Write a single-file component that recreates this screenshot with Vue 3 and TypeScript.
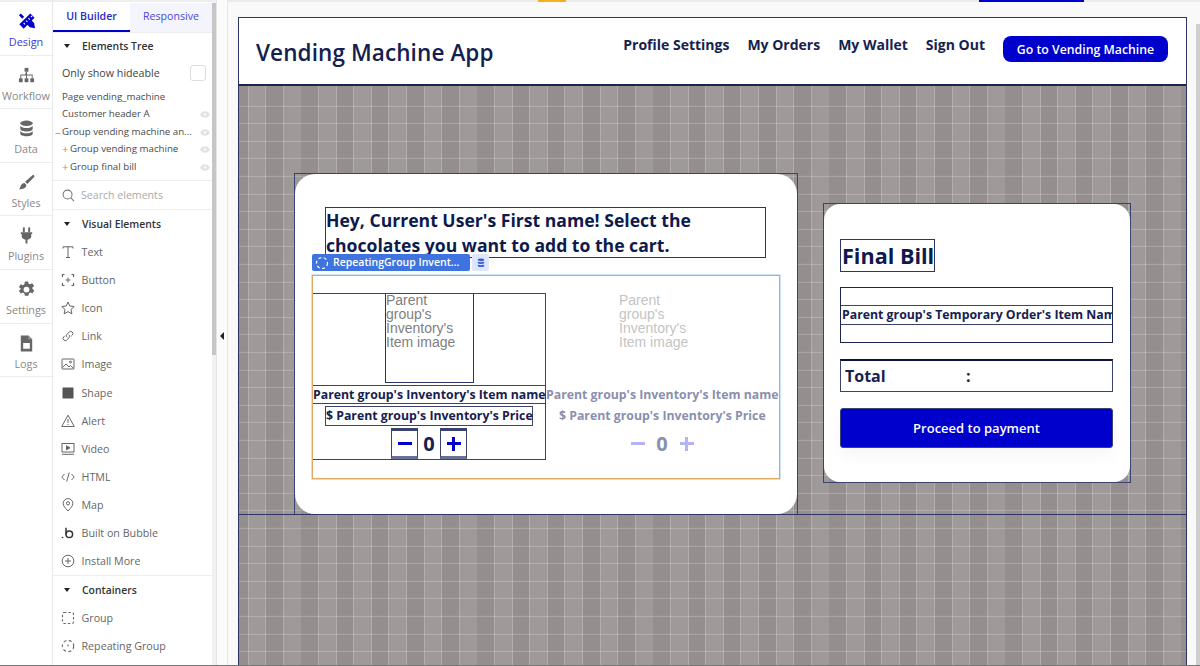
<script setup lang="ts">
const rail = [
  { key: 'design', label: 'Design' },
  { key: 'workflow', label: 'Workflow' },
  { key: 'data', label: 'Data' },
  { key: 'styles', label: 'Styles' },
  { key: 'plugins', label: 'Plugins' },
  { key: 'settings', label: 'Settings' },
  { key: 'logs', label: 'Logs' },
]
const tree = [
  { label: 'Page vending_machine', prefix: '', eye: false, cls: '' },
  { label: 'Customer header A', prefix: '', eye: true, cls: '' },
  { label: 'Group vending machine an...', prefix: '–', eye: true, cls: 'minus' },
  { label: 'Group vending machine', prefix: '+', eye: true, cls: 'plus' },
  { label: 'Group final bill', prefix: '+', eye: true, cls: 'plus' },
]
const visual = [
  { key: 'text', label: 'Text' },
  { key: 'button', label: 'Button' },
  { key: 'icon', label: 'Icon' },
  { key: 'link', label: 'Link' },
  { key: 'image', label: 'Image' },
  { key: 'shape', label: 'Shape' },
  { key: 'alert', label: 'Alert' },
  { key: 'video', label: 'Video' },
  { key: 'html', label: 'HTML' },
  { key: 'map', label: 'Map' },
  { key: 'bubble', label: 'Built on Bubble' },
  { key: 'install', label: 'Install More' },
]
const containers = [
  { key: 'group', label: 'Group' },
  { key: 'repeating', label: 'Repeating Group' },
]
const nav = ['Profile Settings', 'My Orders', 'My Wallet', 'Sign Out']
</script>

<template>
  <div class="app">
    <nav class="rail">
      <div v-for="r in rail" :key="r.key" class="rail-item" :class="{ active: r.key === 'design' }">
        <svg class="rail-icon" viewBox="0 0 20 20">
          <g v-if="r.key === 'design'" fill="#0000cc">
            <path d="M2 3.500 4 1.500 7.500 5 5.500 7zM11 8.500l2-2 5 5 1 5.500-5.500-1-5-5z" />
            <path d="M14 1.500 18.500 6 7 17.500 2.500 13z" />
            <path d="M14.500 4 16 5.500M12 6.500 13.500 8M9.500 9 11 10.500M7 11.500 8.500 13" stroke="#fff" stroke-width="1.100" />
          </g>
          <g v-else-if="r.key === 'workflow'" fill="#666">
            <rect x="8" y="2" width="4" height="4" />
            <rect x="2" y="13" width="4" height="4" rx=".6" />
            <rect x="8" y="13" width="4" height="4" rx=".6" />
            <rect x="14" y="13" width="4" height="4" rx=".6" />
            <path d="M9.500 6h1v3H16.500v4h-1v-3h-5v3h-1v-3h-5v3h-1V9h5z" />
          </g>
          <g v-else-if="r.key === 'data'" fill="#666">
            <ellipse cx="10" cy="4.500" rx="6.500" ry="2.800" />
            <path d="M3.500 7c1 1.600 3.600 2.400 6.500 2.400S15.500 8.600 16.500 7v3.500c0 1.500-2.900 2.700-6.500 2.700s-6.500-1.200-6.500-2.700z" />
            <path d="M3.500 12.500c1 1.600 3.600 2.400 6.500 2.400s5.500-.8 6.500-2.400v3c0 1.500-2.900 2.700-6.500 2.700s-6.500-1.200-6.500-2.700z" />
          </g>
          <g v-else-if="r.key === 'styles'" fill="#666">
            <path d="M18 2.500c.6.500.4 1.200-.2 1.900l-7 7.100-2.300-2.200 7.500-6.600c.7-.6 1.400-.7 2-.2z" />
            <path d="M7.800 10.400l2 2c.2 2.700-2.200 5-7.800 4.600 1.500-1 1.300-2.200 1.900-3.600.7-1.700 2.300-3 3.900-3z" />
          </g>
          <g v-else-if="r.key === 'plugins'" fill="#666">
            <rect x="6.200" y="1.500" width="2" height="5" />
            <rect x="11.800" y="1.500" width="2" height="5" />
            <path d="M4 6.500h12v2h-1v2.500c0 1.800-2 3-4 3.400V18.500H9v-4.100c-2-.4-4-1.600-4-3.400V8.500H4z" />
          </g>
          <g v-else-if="r.key === 'settings'" fill="#666">
            <path fill-rule="evenodd" d="M8.300 1.500h3.400l.5 2.400 1.500.7 2.200-1.200 2.200 2.900-1.900 1.600.1 1.600 1.900 1.500-1.900 3-2.300-.9-1.400.8-.6 2.600H8.300l-.6-2.500-1.400-.8-2.400 1-1.900-3 2-1.600V9L2 7.400 4 4.400l2.300 1 1.500-.9zM10 7a3.100 3.100 0 100 6.200A3.100 3.100 0 0010 7z" />
          </g>
          <g v-else fill="#666">
            <path fill-rule="evenodd" d="M4 1.500h8l4 4V18.500H4zM6.500 9.500v6h7v-6z" />
            <path d="M12 1.500 16 5.500h-4z" fill="#999" />
          </g>
        </svg>
        <span class="rail-label">{{ r.label }}</span>
      </div>
    </nav>

    <aside class="panel">
      <div class="tabs">
        <div class="tab on">UI Builder</div>
        <div class="tab off">Responsive</div>
      </div>
      <div class="section-head tree-head"><i class="caret"></i>Elements Tree</div>
      <div class="hideable">
        <span>Only show hideable</span>
        <span class="check"></span>
      </div>
      <div class="tree">
        <div v-for="t in tree" :key="t.label" class="tree-row" :class="t.cls">
          <span v-if="t.prefix" class="prefix">{{ t.prefix }}</span>
          <span class="tree-label">{{ t.label }}</span>
          <svg v-if="t.eye" class="eye" viewBox="0 0 12 8">
            <path d="M0 4c1.600-2.600 3.600-4 6-4s4.400 1.400 6 4c-1.600 2.600-3.600 4-6 4S1.600 6.600 0 4z" fill="#e2e2e2" />
            <circle cx="6" cy="4" r="1.700" fill="#f6f6f6" />
          </svg>
        </div>
      </div>
      <div class="search">
        <svg class="search-icon" viewBox="0 0 14 14" fill="none" stroke="#777" stroke-width="1.100">
          <circle cx="6" cy="6" r="4.800" />
          <path d="M9.500 9.500 13 13" />
        </svg>
        <span>Search elements</span>
      </div>
      <div class="section-head visual-head"><i class="caret"></i>Visual Elements</div>
      <div class="list">
        <div v-for="v in visual" :key="v.key" class="list-row">
          <svg class="list-icon" viewBox="0 0 14 14" fill="none" stroke="#666" stroke-width="1">
            <path v-if="v.key === 'text'" d="M2 3.500V1.800h10v1.700M7 1.800V12.500M5 12.500h4" />
            <g v-else-if="v.key === 'button'">
              <path d="M3.500 1.500h-2v2.500M10.500 1.500h2v2.500M3.500 12.500h-2V10M10.500 12.500h2V10" stroke-width="1.200" />
              <path d="M7 4.500v5M4.500 7h5" />
            </g>
            <path v-else-if="v.key === 'icon'" d="M7 1 8.800 5l4.400.5-3.200 3 .9 4.400L7 10.600 3.100 12.900l.9-4.400-3.200-3L5.200 5z" />
            <g v-else-if="v.key === 'link'">
              <path d="M6 8.200a2.200 2.200 0 010-3l2.300-2.300a2.200 2.200 0 013.100 3.100L10.200 7.200" />
              <path d="M8 5.800a2.200 2.200 0 010 3L5.700 11.100a2.200 2.200 0 01-3.100-3.100L3.800 6.800" />
            </g>
            <g v-else-if="v.key === 'image'">
              <rect x="1" y="2" width="12" height="10" rx=".8" />
              <path d="M1.500 10.500 5 7l3 3 1.500-1.500 3 3" />
              <circle cx="9.500" cy="5" r="1" />
            </g>
            <rect v-else-if="v.key === 'shape'" x="1.500" y="1.500" width="11" height="11" rx=".6" fill="#555" stroke="none" />
            <g v-else-if="v.key === 'alert'">
              <path d="M7 1.200 13.300 12.500H.7z" />
              <path d="M7 5v4M7 10v1" />
            </g>
            <g v-else-if="v.key === 'video'">
              <rect x="1" y="1.500" width="12" height="8.500" />
              <path d="M5.500 3.800 9 5.800 5.500 7.800z" fill="#666" />
              <path d="M1 12.300h12" />
            </g>
            <g v-else-if="v.key === 'html'">
              <path d="M3.500 4 .8 7l2.700 3M10.500 4l2.700 3-2.700 3M8.300 2.500 5.700 11.500" />
            </g>
            <g v-else-if="v.key === 'map'">
              <path d="M7 13C4 9.800 2.200 7.700 2.200 5.400a4.800 4.800 0 019.600 0C11.800 7.700 10 9.800 7 13z" />
              <circle cx="7" cy="5.300" r="1.600" />
            </g>
            <g v-else-if="v.key === 'bubble'" stroke="#333">
              <circle cx="8.300" cy="8.300" r="3.300" stroke-width="1.500" />
              <path d="M5 1.800V8.300" stroke-width="1.500" />
              <circle cx="1.500" cy="11.500" r=".8" fill="#333" stroke="none" />
            </g>
            <g v-else>
              <circle cx="7" cy="7" r="5.800" />
              <path d="M7 4v6M4 7h6" />
            </g>
          </svg>
          <span>{{ v.label }}</span>
        </div>
      </div>
      <div class="section-head containers-head"><i class="caret"></i>Containers</div>
      <div class="list">
        <div v-for="c in containers" :key="c.key" class="list-row">
          <svg class="list-icon" viewBox="0 0 14 14" fill="none" stroke="#666" stroke-width="1.100">
            <rect v-if="c.key === 'group'" x="1.500" y="1.500" width="11" height="11" rx="1.500" stroke-dasharray="2.400 2" />
            <g v-else>
              <circle cx="7" cy="7" r="5.700" stroke-dasharray="3 2.400" />
              <path d="M7 5.500v2" />
            </g>
          </svg>
          <span>{{ c.label }}</span>
        </div>
      </div>
    </aside>

    <div class="scroll"><div class="thumb"></div></div>
    <div class="handle"><i></i></div>

    <main class="canvas">
      <div class="page">
        <header class="head">
          <h1 class="brand">Vending Machine App</h1>
          <div class="nav">
            <a v-for="n in nav" :key="n">{{ n }}</a>
          </div>
          <button class="cta">Go to Vending Machine</button>
        </header>
        <section class="stage">
          <div class="wrap">
            <div class="card left">
              <div class="card-inner">
                <div class="hello">Hey, Current User's First name! Select the chocolates you want to add to the cart.</div>
                <div class="rg-tag">
                  <span class="tag-main">
                    <svg class="tag-icon" viewBox="0 0 14 14" fill="none" stroke="#fff" stroke-width="1.200"><circle cx="7" cy="7" r="5.500" stroke-dasharray="3 2.400" /></svg>
                    RepeatingGroup Invent...
                  </span>
                  <span class="tag-db">
                    <svg viewBox="0 0 10 12" width="8" height="10" fill="#3b5fe0"><ellipse cx="5" cy="2" rx="4" ry="1.700" /><path d="M1 4.200c1 1 7 1 8 0v2c-1 1.300-7 1.300-8 0zM1 8c1 1 7 1 8 0v2c-1 1.400-7 1.400-8 0z" /></svg>
                  </span>
                </div>
                <div class="rg">
                  <div class="rg-cell first">
                    <div class="cell-top"></div>
                    <div class="item">
                      <div class="img-box">Parent group's Inventory's Item image</div>
                      <div class="name boxed">Parent group's Inventory's Item name</div>
                      <div class="price boxed">$ Parent group's Inventory's Price</div>
                      <div class="counter">
                        <span class="pm boxed"><b class="minus-bar"></b></span>
                        <span class="qty">0</span>
                        <span class="pm boxed"><b class="plus-bar"></b></span>
                      </div>
                    </div>
                  </div>
                  <div class="rg-cell ghost">
                    <div class="cell-top"></div>
                    <div class="item">
                      <div class="img-box">Parent group's Inventory's Item image</div>
                      <div class="name boxed">Parent group's Inventory's Item name</div>
                      <div class="price boxed">$ Parent group's Inventory's Price</div>
                      <div class="counter">
                        <span class="pm boxed"><b class="minus-bar"></b></span>
                        <span class="qty">0</span>
                        <span class="pm boxed"><b class="plus-bar"></b></span>
                      </div>
                    </div>
                  </div>
                </div>
              </div>
            </div>
            <div class="card right">
              <div class="bill">
                <div class="bill-title">Final Bill</div>
                <div class="bill-list">
                  <div class="bill-row">Parent group's Temporary Order's Item Name</div>
                </div>
                <div class="total"><span class="total-l">Total</span><span>:</span></div>
                <button class="pay">Proceed to payment</button>
              </div>
            </div>
          </div>
        </section>
      </div>
      <div class="page-scroll"></div>
    </main>
  </div>
</template>

<style scoped>
.app {
  width: 1200px;
  height: 666px;
  display: flex;
  overflow: hidden;
  font-family: "Open Sans", sans-serif;
  background: #fff;
  position: relative;
}
.app::after {
  content: "";
  position: absolute;
  left: 0;
  right: 0;
  bottom: 0;
  height: 1px;
  background: #777;
}
.rail {
  width: 53px;
  flex: none;
  border-top: 2px solid #eee;
  box-sizing: border-box;
  border-right: 1px solid #e8e8e8;
  background: #fff;
}
.rail-item {
  height: 53.600px;
  box-sizing: border-box;
  border-bottom: 1px solid #ececec;
  display: flex;
  flex-direction: column;
  align-items: center;
  padding-top: 10px;
  color: #888;
  font-size: 10.800px;
}
.rail-item.active { color: #3838d8; }
.rail-icon { width: 19px; height: 19px; flex: none; }
.rail-label { margin-top: 3px; line-height: 15px; }
.panel {
  width: 159px;
  flex: none;
  font-size: 10.700px;
  color: #555;
  background: #fff;
  border-top: 2px solid #eee;
  padding-top: 1px;
  box-sizing: border-box;
  overflow: hidden;
}
.tabs { display: flex; height: 29px; border-bottom: 1px solid #eee; font-size: 10.600px; }
.tab { text-align: center; line-height: 26px; font-weight: 600; }
.tab.on { width: 77px; color: #2a2ac8; border-bottom: 2px solid #0000cc; height: 29px; box-sizing: border-box; }
.tab.off { flex: 1; color: #4848d8; background: #f4f4fd; font-weight: 400; }
.section-head {
  display: flex;
  align-items: center;
  font-weight: 600;
  font-size: 10.400px;
  color: #333;
  height: 14px;
  line-height: 14px;
}
.caret {
  width: 0;
  height: 0;
  border-left: 3.500px solid transparent;
  border-right: 3.500px solid transparent;
  border-top: 4px solid #222;
  margin: 0 12px 0 11px;
}
.tree-head { margin-top: 6px; }
.hideable {
  display: flex;
  align-items: center;
  justify-content: space-between;
  padding: 0 6px 0 9px;
  margin-top: 11px;
  height: 18px;
  color: #444;
}
.check {
  width: 14px;
  height: 14px;
  border: 1px solid #ddd;
  border-radius: 3px;
}
.tree {
  margin-top: 6px;
  padding-bottom: 5px;
  border-bottom: 1px solid #eee;
  height: 93px;
  box-sizing: border-box;
}
.tree-row {
  height: 17.400px;
  line-height: 17.400px;
  display: flex;
  align-items: center;
  padding-left: 9px;
  position: relative;
  font-size: 9.700px;
  color: #4a4a4a;
  white-space: nowrap;
}
.tree-row .prefix { color: #999; font-size: 11px; }
.tree-row.plus { padding-left: 9px; }
.tree-row.plus .prefix { width: 8px; }
.tree-row.minus .prefix { position: absolute; left: 2px; }
.eye { position: absolute; right: 2px; top: 6px; width: 10px; height: 7px; }
.search {
  height: 29px;
  border-bottom: 1px solid #eee;
  display: flex;
  align-items: center;
  color: #aaa;
  font-size: 10.600px;
  box-sizing: border-box;
}
.search-icon { width: 13px; height: 13px; margin: 0 6px 0 9px; }
.visual-head { margin-top: 7px; }
.list { padding-top: 7px; }
.list-row {
  height: 28.100px;
  display: flex;
  align-items: center;
  color: #666;
}
.list-icon { width: 14px; height: 14px; margin: 0 6.500px 0 8px; flex: none; }
.containers-head {
  margin-top: 0;
  border-top: 1px solid #eee;
  height: 28px;
}
.containers-head + .list { padding-top: 0; }
.scroll {
  width: 5px;
  flex: none;
  background: #f1f1f1;
  padding-top: 3px;
  box-sizing: border-box;
  border-right: 1px solid #e4e4e4;
}
.thumb { height: 352px; width: 4px; background: #c6c6c6; }
.handle {
  width: 11px;
  flex: none;
  background: #fbfbfb;
  border-right: 1px solid #e8e8e8;
  box-sizing: border-box;
  display: flex;
  align-items: flex-start;
  justify-content: center;
  padding-top: 332px;
}
.handle i {
  width: 0;
  height: 0;
  border-top: 4px solid transparent;
  border-bottom: 4px solid transparent;
  border-right: 4px solid #222;
}
.canvas {
  flex: 1;
  min-width: 0;
  background: #f9f9f9;
  padding: 15px 13px 0 10px;
  box-sizing: border-box;
  position: relative;
  border-top: 2px solid #ececec;
  background-clip: padding-box;
}
.canvas::before {
  content: "";
  position: absolute;
  left: 310px;
  top: -2px;
  width: 28px;
  height: 2px;
  background: #f5b020;
}
.canvas::after {
  content: "";
  position: absolute;
  left: 751px;
  top: -2px;
  width: 105px;
  height: 2px;
  background: #0000cc;
}
.page-scroll {
  position: absolute;
  right: 0;
  top: 22px;
  bottom: 0;
  width: 4px;
  background: #cfcfcf;
}
.page {
  height: 100%;
  border: 1px solid #2d3566;
  border-bottom: none;
  box-sizing: border-box;
  display: flex;
  flex-direction: column;
  background: #fff;
}
.head {
  height: 68px;
  flex: none;
  border-bottom: 2px solid #1c2452;
  box-sizing: border-box;
  display: flex;
  position: relative;
  padding-left: 17px;
  color: #14204f;
}
.brand {
  margin: 18px 0 0;
  font-size: 22.500px;
  line-height: 33px;
  font-weight: 600;
  color: #14204f;
  letter-spacing: .1px;
}
.nav {
  margin-left: auto;
  display: flex;
  gap: 18px;
  padding-top: 17px;
  font-size: 14px;
  line-height: 20px;
  font-weight: 700;
  color: #16214f;
}
.cta {
  margin: 18px 18px 0 18px;
  width: 165px;
  height: 26px;
  border: none;
  border-radius: 8px;
  background: #0000cc;
  color: #fff;
  font: 600 12.300px "Open Sans", sans-serif;
  padding: 0;
}
.stage {
  flex: 1;
  min-height: 0;
  background-color: #948f8e;
  background-image:
    repeating-linear-gradient(180deg, transparent 0, transparent 16.600px, rgba(255,255,255,.22) 16.600px, rgba(255,255,255,.22) 17.600px),
    repeating-linear-gradient(90deg, transparent 0, transparent 8.600px, rgba(255,255,255,.28) 8.600px, rgba(255,255,255,.28) 9.600px, rgba(255,255,255,.1) 9.600px, rgba(255,255,255,.1) 26.400px, rgba(255,255,255,.28) 26.400px, rgba(255,255,255,.28) 27.200px, transparent 27.200px, transparent 35.200px);
  background-position: 0 2.900px, 0 0;
}
.wrap {
  height: 429px;
  border-bottom: 1px solid #2d3566;
  box-sizing: border-box;
  display: flex;
  align-items: flex-start;
  padding: 87px 0 0 55px;
}
.card {
  box-sizing: border-box;
  border: 1px solid #3a4270;
  background: transparent;
  flex: none;
}
.left { width: 504px; height: 341px; border-bottom: none; }
.card-inner {
  height: 100%;
  background: #fff;
  border-radius: 20px;
  box-sizing: border-box;
  padding: 33px 0 0 17px;
  position: relative;
}
.hello {
  width: 441px;
  height: 51px;
  margin-left: 13px;
  box-sizing: border-box;
  border: 1px solid #2d3566;
  font-size: 17.600px;
  line-height: 24.500px;
  font-weight: 700;
  color: #0d1a4d;
}
.rg-tag {
  position: absolute;
  left: 17px;
  top: 80px;
  display: flex;
  gap: 2px;
  font-size: 10.500px;
  font-weight: 600;
  color: #fff;
  line-height: 17px;
}
.tag-main {
  width: 158px;
  height: 17px;
  background: #3f74e0;
  border-radius: 2px;
  display: flex;
  align-items: center;
  white-space: nowrap;
}
.tag-icon { width: 14px; height: 14px; margin: 0 4px 0 3px; }
.tag-db {
  width: 17px;
  height: 17px;
  background: #dde6fb;
  border-radius: 2px;
  display: flex;
  align-items: center;
  justify-content: center;
}
.rg {
  width: 468px;
  height: 204px;
  margin-top: 17px;
  display: flex;
  position: relative;
}
.rg::after {
  content: "";
  position: absolute;
  inset: 0;
  border: 1px solid #e0a860;
  box-shadow: 0 0 0 .5px rgba(110, 170, 225, .7);
  pointer-events: none;
}
.rg-cell { width: 234px; flex: none; box-sizing: border-box; }
.cell-top { height: 18px; }
.item {
  height: 167px;
  width: 234px;
  box-sizing: border-box;
  border: 1px solid transparent;
  display: flex;
  flex-direction: column;
  align-items: center;
}
.first .item { border-color: #3a4270; }
.ghost .item { margin-left: -1px; }
.img-box {
  width: 89px;
  height: 90px;
  margin: -1px 0 0 1px;
  box-sizing: border-box;
  border: 1px solid #2d3566;
  border-top: none;
  font-family: "Liberation Sans", Arial, sans-serif;
  font-size: 14px;
  line-height: 14px;
  color: #808080;
  flex: none;
}
.name {
  width: 100%;
  height: 19px;
  margin-top: 2px;
  line-height: 17px;
  font-size: 12.300px;
  font-weight: 700;
  color: #16214f;
  text-align: center;
  white-space: nowrap;
  box-sizing: border-box;
  flex: none;
}
.price {
  width: 208px;
  height: 20px;
  margin-top: 2px;
  flex: none;
  box-sizing: border-box;
  font-size: 12.300px;
  font-weight: 700;
  line-height: 18px;
  color: #16214f;
  text-align: center;
  white-space: nowrap;
}
.boxed { border: 1px solid #3a4270; }
.name.boxed { border-left: none; border-right: none; }
.counter {
  display: flex;
  align-items: stretch;
  margin-top: 2px;
  height: 31px;
  width: 76px;
  flex: none;
}
.pm {
  width: 27px;
  flex: none;
  box-sizing: border-box;
  display: flex;
  align-items: center;
  justify-content: center;
  position: relative;
}
.pm.boxed { border-top: 3px solid #3a4270; border-bottom: 3px solid #6a6f95; }
.minus-bar { width: 14px; height: 3.500px; background: #0000cc; display: block; }
.plus-bar { width: 14px; height: 3.500px; background: #0000cc; display: block; position: relative; }
.plus-bar::after {
  content: "";
  position: absolute;
  left: 5.250px;
  top: -5.250px;
  width: 3.500px;
  height: 14px;
  background: #0000cc;
}
.qty {
  width: 22px;
  text-align: center;
  font-size: 20px;
  line-height: 31px;
  font-weight: 700;
  color: #16214f;
}
.ghost .img-box { border-color: transparent; color: #c4c4c4; }
.ghost .boxed, .ghost .pm.boxed { border-color: transparent; }
.ghost .name, .ghost .price, .ghost .qty { color: #8a8fb0; }
.ghost .minus-bar, .ghost .plus-bar, .ghost .plus-bar::after { background: #b4b4f0; }
.right {
  width: 308px;
  height: 280px;
  margin: 30px 0 0 25px;
}
.bill {
  height: 100%;
  background: #fff;
  border-radius: 16px;
  box-sizing: border-box;
  padding: 35px 17px 0 16px;
}
.bill-title {
  width: 95px;
  height: 33px;
  box-sizing: border-box;
  border: 1px solid #2d3566;
  font-size: 21.600px;
  line-height: 31px;
  font-weight: 700;
  color: #0d1a4d;
  white-space: nowrap;
  padding-left: 1px;
}
.bill-list {
  margin-top: 15px;
  height: 56px;
  box-sizing: border-box;
  border: 1px solid #1c2452;
  padding-top: 17px;
  overflow: hidden;
}
.bill-row {
  height: 20px;
  box-sizing: border-box;
  border-top: 1px solid #3a4270;
  border-bottom: 1px solid #3a4270;
  font-size: 12.300px;
  line-height: 17px;
  font-weight: 700;
  color: #16214f;
  white-space: nowrap;
  overflow: hidden;
  padding-left: 1px;
}
.total {
  margin-top: 16px;
  height: 33px;
  box-sizing: border-box;
  border: 1px solid #3a4270;
  border-top: 2px solid #0a1240;
  display: flex;
  align-items: center;
  padding-left: 4px;
  font-size: 16px;
  font-weight: 700;
  color: #16214f;
}
.total-l { width: 121px; }
.pay {
  display: block;
  width: 100%;
  margin-top: 16px;
  height: 40px;
  box-sizing: border-box;
  border: 1px solid #3a4270;
  border-radius: 3px;
  background: #0000cc;
  color: #fff;
  font: 600 13px "Open Sans", sans-serif;
  box-shadow: 0 8px 16px rgba(0,0,0,.04);
}
</style>

<style>
html, body { margin: 0; padding: 0; overflow: hidden; }
</style>
